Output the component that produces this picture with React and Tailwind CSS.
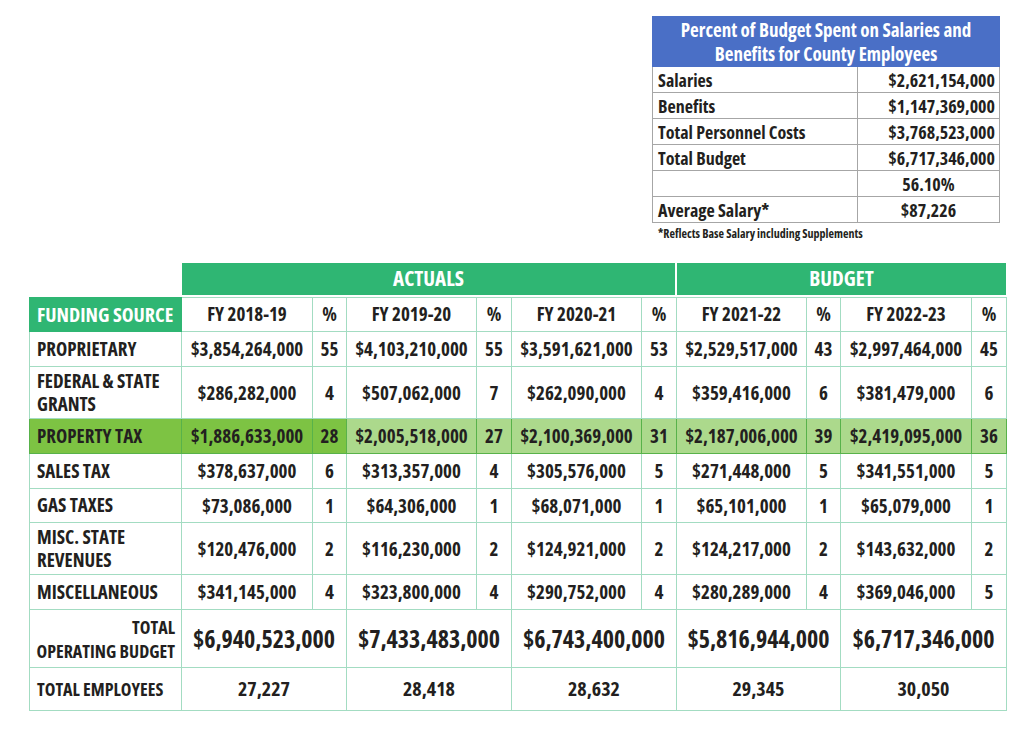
import React from "react";

const font = { fontFamily: '"Open Sans", "DejaVu Sans Condensed", sans-serif' };

const salaryRows = [
  ["Salaries", "$2,621,154,000"],
  ["Benefits", "$1,147,369,000"],
  ["Total Personnel Costs", "$3,768,523,000"],
  ["Total Budget", "$6,717,346,000"],
  ["", "56.10%"],
  ["Average Salary*", "$87,226"],
];

const years = ["FY 2018-19", "FY 2019-20", "FY 2020-21", "FY 2021-22", "FY 2022-23"];

const rows = [
  { label: ["PROPRIETARY"], h: "h-[35px]", vals: [["$3,854,264,000", "55"], ["$4,103,210,000", "55"], ["$3,591,621,000", "53"], ["$2,529,517,000", "43"], ["$2,997,464,000", "45"]] },
  { label: ["FEDERAL & STATE", "GRANTS"], h: "h-[52px]", vals: [["$286,282,000", "4"], ["$507,062,000", "7"], ["$262,090,000", "4"], ["$359,416,000", "6"], ["$381,479,000", "6"]] },
  { label: ["PROPERTY TAX"], h: "h-[35px]", hl: true, vals: [["$1,886,633,000", "28"], ["$2,005,518,000", "27"], ["$2,100,369,000", "31"], ["$2,187,006,000", "39"], ["$2,419,095,000", "36"]] },
  { label: ["SALES TAX"], h: "h-[35px]", vals: [["$378,637,000", "6"], ["$313,357,000", "4"], ["$305,576,000", "5"], ["$271,448,000", "5"], ["$341,551,000", "5"]] },
  { label: ["GAS TAXES"], h: "h-[34px]", vals: [["$73,086,000", "1"], ["$64,306,000", "1"], ["$68,071,000", "1"], ["$65,101,000", "1"], ["$65,079,000", "1"]] },
  { label: ["MISC. STATE", "REVENUES"], h: "h-[52px]", vals: [["$120,476,000", "2"], ["$116,230,000", "2"], ["$124,921,000", "2"], ["$124,217,000", "2"], ["$143,632,000", "2"]] },
  { label: ["MISCELLANEOUS"], h: "h-[35px]", vals: [["$341,145,000", "4"], ["$323,800,000", "4"], ["$290,752,000", "4"], ["$280,289,000", "4"], ["$369,046,000", "5"]] },
];

const totals = ["$6,940,523,000", "$7,433,483,000", "$6,743,400,000", "$5,816,944,000", "$6,717,346,000"];
const employees = ["27,227", "28,418", "28,632", "29,345", "30,050"];

const cell = "border border-[#a3dcc2] text-center text-[#231f20]";

export default function App() {
  return (
    <div className="w-[1024px] h-[729px] overflow-hidden bg-white font-bold font-stretch-[75%] text-[#231f20]" style={font}>
      {/* salaries box */}
      <div className="ml-[652px] pt-[16px] w-[348px]">
        <table className="w-full border-collapse">
          <thead>
            <tr>
              <th colSpan={2} className="h-[50px] bg-[#4a6fc6] border border-[#4a6fc6] text-white text-[19px] leading-[24px] font-bold text-center">
                <div>Percent of Budget Spent on Salaries and</div>
                <div>Benefits for County Employees</div>
              </th>
            </tr>
          </thead>
          <tbody>
            {salaryRows.map(([k, v], i) => (
              <tr key={i} className="h-[26px]">
                <td className="w-[205px] border border-[#a6a6a6] px-[5px] text-[18px] leading-[22px] text-left">{k}</td>
                <td className={`border border-[#a6a6a6] px-[4px] text-[18px] leading-[22px] ${i >= 4 ? "text-center" : "text-right"}`}>{v}</td>
              </tr>
            ))}
          </tbody>
        </table>
        <div className="mt-[4px] ml-[6px] text-[12px] leading-[14px]">*Reflects Base Salary including Supplements</div>
      </div>

      {/* main table */}
      <div className="ml-[29px] mt-[22px] w-[977px]">
        <div className="flex ml-[153px] gap-[2px]">
          <div className="w-[493px] h-[32px] bg-[#2fb673] text-white text-[21px] flex items-center justify-center">ACTUALS</div>
          <div className="w-[329px] h-[32px] bg-[#2fb673] text-white text-[21px] flex items-center justify-center">BUDGET</div>
        </div>
        <table className="mt-[2px] w-[977px] border-collapse table-fixed">
          <colgroup>
            <col className="w-[152px]" />
            <col className="w-[131px]" />
            <col className="w-[34px]" />
            <col className="w-[130px]" />
            <col className="w-[35px]" />
            <col className="w-[130px]" />
            <col className="w-[35px]" />
            <col className="w-[130px]" />
            <col className="w-[34px]" />
            <col className="w-[131px]" />
            <col className="w-[35px]" />
          </colgroup>
          <tbody>
            <tr className="h-[34px] text-[19px]">
              <td className="bg-[#2fb673] border border-[#2fb673] text-white text-[20px] px-[7px] text-left whitespace-nowrap">FUNDING SOURCE</td>
              {years.map((y) => (
                <React.Fragment key={y}>
                  <td className={`${cell} whitespace-nowrap`}>{y}</td>
                  <td className={cell}>%</td>
                </React.Fragment>
              ))}
            </tr>
            {rows.map((r) => (
              <tr key={r.label[0]} className={`${r.h} text-[19px] leading-[22px]`}>
                <td className={`px-[7px] text-left leading-[23px] border ${r.hl ? "bg-[#7dc343] border-[#58b24a]" : "border-[#a3dcc2]"}`}>
                  {r.label.map((l) => (
                    <div key={l} className="whitespace-nowrap">{l}</div>
                  ))}
                </td>
                {r.vals.map(([v, p], i) => {
                  const bg = r.hl ? (i === 0 ? "bg-[#7dc343] border-[#58b24a]" : "bg-[#acd98c] border-[#58b24a]") : "border-[#a3dcc2]";
                  return (
                    <React.Fragment key={i}>
                      <td className={`border text-center whitespace-nowrap ${bg}`}>{v}</td>
                      <td className={`border text-center ${bg}`}>{p}</td>
                    </React.Fragment>
                  );
                })}
              </tr>
            ))}
            <tr className="h-[58px]">
              <td className="border border-[#a3dcc2] text-right pr-[6px] text-[18px] leading-[24px]">
                <div>TOTAL</div>
                <div className="whitespace-nowrap">OPERATING BUDGET</div>
              </td>
              {totals.map((t) => (
                <td key={t} colSpan={2} className={`${cell} text-[24px] whitespace-nowrap`}>{t}</td>
              ))}
            </tr>
            <tr className="h-[43px]">
              <td className="border border-[#a3dcc2] text-left px-[7px] text-[18px] whitespace-nowrap">TOTAL EMPLOYEES</td>
              {employees.map((e) => (
                <td key={e} colSpan={2} className={`${cell} text-[20px]`}>{e}</td>
              ))}
            </tr>
          </tbody>
        </table>
        <div className="mt-[12px] ml-[476px] text-[14px] font-normal text-[#444]">18</div>
      </div>
    </div>
  );
}
